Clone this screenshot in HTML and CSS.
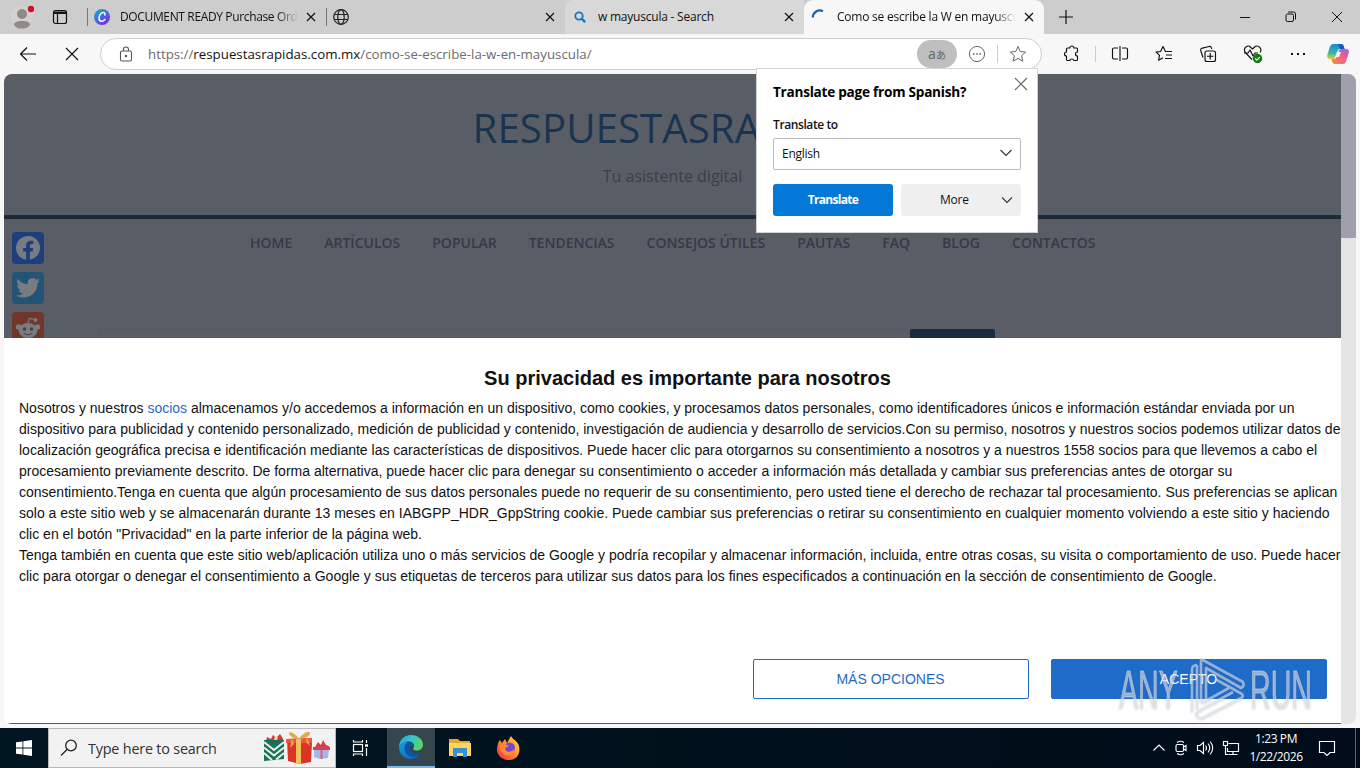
FILE: index.html
```html
<!DOCTYPE html>
<html lang="es">

<head>
  <meta charset="UTF-8">
  <title>Como se escribe la W en mayuscula</title>
  <link rel="stylesheet" href="styles.css">
</head>

<body>
  <div class="desktop">
    <div class="tabstrip">
      <div class="profile">
        <svg width="24" height="26" viewBox="0 0 24 26">
          <circle cx="12" cy="13" r="11" fill="#d3d2d0" />
          <circle cx="12" cy="10" r="5" fill="#8e8b88" />
          <path d="M4 21c0-3 3-4 8-4s8 1 8 4c-2 3-5 3.500-8 3.500s-6-.5-8-3.500z" fill="#8e8b88" />
          <circle cx="21" cy="5" r="3.200" fill="#d20f24" />
        </svg>
      </div>
      <div class="workspaces">
        <svg width="16" height="16" viewBox="0 0 16 16" fill="none" stroke="#111" stroke-width="1.200">
          <rect x="1.500" y="1.500" width="13" height="13" rx="2" />
          <path d="M2 3h12M5.500 4.500v10" />
          <path d="M1.500 4h13" stroke-width="2" />
        </svg>
      </div>
      <div class="tab tab-first">
        <svg class="favicon" width="16" height="16" viewBox="0 0 16 16">
          <defs>
            <linearGradient id="canva" x1="0" y1="0" x2=".7" y2="1">
              <stop offset="0" stop-color="#12b8ca" />
              <stop offset=".5" stop-color="#3b72dc" />
              <stop offset="1" stop-color="#8427df" />
            </linearGradient>
          </defs>
          <circle cx="8" cy="8" r="8" fill="url(#canva)" />
          <path d="M10.800 6c.7-2-.4-2.800-1.700-2.500C6.700 4 5 6.700 5 9.300c0 3.300 3.300 4.200 6 1.200" fill="none" stroke="#fff" stroke-width="1.500" stroke-linecap="round" />
        </svg>
        <span class="tab-title title-canva">DOCUMENT READY Purchase Order</span>
        <svg class="tab-close" width="10" height="10" viewBox="0 0 10 10"><path d="M1 1l8 8M9 1L1 9" /></svg>
      </div>
      <div class="tab tab-blank">
        <svg class="favicon" width="16" height="16" viewBox="0 0 16 16" fill="none" stroke="#222" stroke-width="1.200">
          <circle cx="8" cy="8" r="7.300" />
          <ellipse cx="8" cy="8" rx="3.200" ry="7.300" />
          <path d="M1.300 5.500h13.400M1.300 10.500h13.400" />
        </svg>
        <span class="tab-title"></span>
        <svg class="tab-close" width="10" height="10" viewBox="0 0 10 10"><path d="M1 1l8 8M9 1L1 9" /></svg>
      </div>
      <div class="tab tab-search">
        <svg class="favicon" width="16" height="16" viewBox="0 0 16 16" fill="none" stroke="#1c74c4">
          <circle cx="7" cy="7" r="3.700" stroke-width="1.800" />
          <path d="M9.800 9.800l3.400 3.400" stroke-width="2.400" />
        </svg>
        <span class="tab-title title-search">w mayuscula - Search</span>
        <svg class="tab-close" width="10" height="10" viewBox="0 0 10 10"><path d="M1 1l8 8M9 1L1 9" /></svg>
      </div>
      <div class="tab tab-active">
        <svg class="favicon" width="16" height="16" viewBox="0 0 16 16" fill="none" stroke="#1b62a8" stroke-width="2.200">
          <path d="M1.800 8.500A7 7 0 0 1 12 2.300" />
        </svg>
        <span class="tab-title title-active">Como se escribe la W en mayuscula</span>
        <svg class="tab-close" width="10" height="10" viewBox="0 0 10 10"><path d="M1 1l8 8M9 1L1 9" /></svg>
      </div>
      <div class="new-tab">
        <svg width="14" height="14" viewBox="0 0 14 14" stroke="#111" stroke-width="1.200"><path d="M7 0v14M0 7h14" /></svg>
      </div>
      <div class="window-buttons">
        <svg width="46" height="34" viewBox="0 0 46 34"><path d="M18 17.500h10" /></svg>
        <svg width="46" height="34" viewBox="0 0 46 34">
          <rect x="18" y="14" width="7.500" height="7.500" rx="1.500" />
          <path d="M20 12h5.500a2 2 0 0 1 2 2v5.500" />
        </svg>
        <svg width="46" height="34" viewBox="0 0 46 34"><path d="M18 12l10 10M28 12L18 22" /></svg>
      </div>
    </div>

    <div class="toolbar">
      <svg class="tool back" width="20" height="20" viewBox="0 0 20 20"><path d="M18 10H2.500M9 3.500L2.500 10L9 16.500" /></svg>
      <svg class="tool stop" width="20" height="20" viewBox="0 0 20 20"><path d="M4 4l12 12M16 4L4 16" /></svg>
      <div class="address">
        <svg class="lock" width="14" height="16" viewBox="0 0 14 16" fill="none" stroke="#555" stroke-width="1.100">
          <rect x="1.500" y="5" width="11" height="10" rx="1.500" />
          <path d="M4.500 5V3.500a2.500 2.500 0 0 1 5 0V5" />
          <circle cx="7" cy="10" r=".7" fill="#555" />
        </svg>
        <div class="url">https://<b>respuestasrapidas.com.mx</b>/como-se-escribe-la-w-en-mayuscula/</div>
        <div class="translate-pill">
          <span class="pill-latin">a</span><span class="pill-kana">あ</span>
        </div>
        <svg class="reader" width="18" height="18" viewBox="0 0 18 18" fill="none" stroke="#666">
          <circle cx="9" cy="9" r="7.600" />
          <path d="M5 9h1.600M8.200 9h1.600M11.400 9h1.600" stroke-width="1.600" />
        </svg>
        <div class="address-line"></div>
        <svg class="star" width="18" height="18" viewBox="0 0 18 18" fill="none" stroke="#666" stroke-linejoin="round"><path d="M9 1.500l2.200 5 5.500.6-4.100 3.600 1.200 5.500L9 13.400l-4.800 2.800 1.200-5.500L1.300 7.100l5.500-.6z" /></svg>
      </div>
      <div class="toolbar-icons">
        <svg class="tool" width="18" height="18" viewBox="0 0 18 18"><path d="M5.500 3h2.300a2 2 0 0 1 4 0h2.700q1 0 1 1v3a2 2 0 0 0 0 4v3.500q0 1-1 1H12a2.200 2.200 0 0 0-4.200 0H5.500q-1 0-1-1V11a2 2 0 0 1 0-4V4q0-1 1-1z" /></svg>
        <div class="tool-line"></div>
        <svg class="tool" width="18" height="18" viewBox="0 0 18 18"><path d="M7 3H3a1.500 1.500 0 0 0-1.500 1.500v8A1.500 1.500 0 0 0 3 14h4M11 3h4a1.500 1.500 0 0 1 1.500 1.500v8A1.500 1.500 0 0 1 15 14h-4M9 1v15" /></svg>
        <svg class="tool" width="18" height="18" viewBox="0 0 18 18"><path d="M17 6.500h-6.500L8 1.500 5.600 6.500l-4.500.6 3.400 3.300-.9 4.800L8 12.800M11 10h6M10 13.500h7" /></svg>
        <svg class="tool" width="18" height="18" viewBox="0 0 18 18"><rect x="6" y="6" width="10.500" height="10.500" rx="2" /><path d="M11.250 8v6.500M8 11.250h6.500M4 12.500L1.700 5.500Q1.300 4 2.500 3.400L10 1.500q2-.4 2.500 1.500l.3 1" /></svg>
        <svg class="tool" width="20" height="20" viewBox="0 0 20 20"><path d="M9 15.500L2.800 9C-.5 5.500 3 1 6.500 2.300L9.500 5l3-2.700C16 1 19.500 5 17 8.500M1 9h4l2-3 3 6 2-3h3" /><circle cx="14.500" cy="14.500" r="4.700" fill="#107c10" stroke="none" /><path d="M12.300 14.500l1.600 1.600 2.900-3" stroke="#fff" /></svg>
        <svg class="tool" width="18" height="18" viewBox="0 0 18 18"><path d="M2 9h2M8 9h2M14 9h2" stroke-width="2" /></svg>
        <svg class="copilot" width="24" height="22" viewBox="0 0 24 22">
          <defs>
            <linearGradient id="copA" x1="0" y1="0" x2="0" y2="1"><stop offset="0" stop-color="#168be0" /><stop offset=".6" stop-color="#36b6a2" /><stop offset="1" stop-color="#f1c52c" /></linearGradient>
            <linearGradient id="copB" x1="1" y1="0" x2="0" y2="1"><stop offset="0" stop-color="#a85adf" /><stop offset=".5" stop-color="#ef6380" /><stop offset="1" stop-color="#f98a42" /></linearGradient>
          </defs>
          <path d="M7 1h8q2 0 2.700 2l.8 3H14q-2 0-2.600 2l-2 6q-.7 2-2.500 2H4q-3.500 0-2.700-4L4 3.500Q5 1 7 1z" fill="url(#copA)" />
          <path d="M17 21H9q-2 0-2.700-2l-.8-3H8q2 0 2.600-2l2-6q.7-2 2.500-2H20q3.500 0 2.700 4L20 18.500Q19 21 17 21z" fill="url(#copB)" />
          <path d="M12 1h3q2 0 2.700 2l.8 3H14z" fill="#1b57c9" />
          <path d="M11 9h4l-2 5H9.300z" fill="#f7f7f7" />
        </svg>
      </div>
    </div>

    <div class="content">
      <div class="page">
        <div class="site">
          <header class="site-header">
            <div class="site-title">RESPUESTASRAPIDAS</div>
            <div class="site-tagline">Tu asistente digital</div>
          </header>
          <nav class="site-nav">
            <a>HOME</a><a>ARTÍCULOS</a><a>POPULAR</a><a>TENDENCIAS</a><a>CONSEJOS ÚTILES</a><a>PAUTAS</a><a>FAQ</a><a>BLOG</a><a>CONTACTOS</a>
          </nav>
          <div class="search-row">
            <div class="search-field"></div>
            <div class="search-button"></div>
          </div>
          <div class="share">
            <svg width="32" height="32" viewBox="0 0 32 32"><rect width="32" height="32" rx="4" fill="#1d3f7e" /><path d="M28 16a12 12 0 1 0-13.900 11.850v-8.400h-3V16h3v-2.650c0-3 1.800-4.650 4.550-4.650 1.300 0 2.700.23 2.700.23v2.950h-1.500c-1.500 0-1.970.95-1.970 1.900V16h3.350l-.55 3.450h-2.800v8.400A12 12 0 0 0 28 16z" fill="#777c83" /></svg>
            <svg width="32" height="32" viewBox="0 0 32 32"><rect width="32" height="32" rx="4" fill="#245475" /><path d="M28 8.500c-.9.400-1.800.66-2.800.78 1-.6 1.800-1.560 2.150-2.700-.95.560-2 .97-3.100 1.190a4.900 4.900 0 0 0-8.400 4.480C11.800 12 8.100 10 5.700 7a4.900 4.900 0 0 0 1.500 6.600c-.8 0-1.560-.25-2.200-.6v.06c0 2.400 1.700 4.400 3.950 4.850-.74.200-1.500.23-2.220.08a4.900 4.900 0 0 0 4.600 3.400A9.900 9.900 0 0 1 4 23.400 13.900 13.900 0 0 0 11.550 25.600c9.060 0 14-7.500 14-14v-.64c.96-.7 1.800-1.560 2.450-2.460z" fill="#777c83" /></svg>
            <svg width="32" height="32" viewBox="0 0 32 32"><rect width="32" height="32" rx="4" fill="#71352a" /><g fill="#777c83"><ellipse cx="16" cy="18.500" rx="9.500" ry="7.500" /><circle cx="6.500" cy="15" r="2.700" /><circle cx="25.500" cy="15" r="2.700" /><circle cx="23.500" cy="8" r="2" /></g><path d="M16 11l1.300-4.700 5 1.200" fill="none" stroke="#777c83" stroke-width="1.200" /><circle cx="12.500" cy="17" r="1.700" fill="#533a37" /><circle cx="19.500" cy="17" r="1.700" fill="#533a37" /><path d="M12 21.500q4 3 8 0" fill="none" stroke="#533a37" /></svg>
          </div>
        </div>

        <div class="consent">
          <h2>Su privacidad es importante para nosotros</h2>
          <p>Nosotros y nuestros <a>socios</a> almacenamos y/o accedemos a información en un dispositivo, como cookies, y procesamos datos personales, como identificadores únicos e información estándar enviada por un<br>
            dispositivo para publicidad y contenido personalizado, medición de publicidad y contenido, investigación de audiencia y desarrollo de servicios.Con su permiso, nosotros y nuestros socios podemos utilizar datos de<br>
            localización geográfica precisa e identificación mediante las características de dispositivos. Puede hacer clic para otorgarnos su consentimiento a nosotros y a nuestros 1558 socios para que llevemos a cabo el<br>
            procesamiento previamente descrito. De forma alternativa, puede hacer clic para denegar su consentimiento o acceder a información más detallada y cambiar sus preferencias antes de otorgar su<br>
            consentimiento.Tenga en cuenta que algún procesamiento de sus datos personales puede no requerir de su consentimiento, pero usted tiene el derecho de rechazar tal procesamiento. Sus preferencias se aplican<br>
            solo a este sitio web y se almacenarán durante 13 meses en IABGPP_HDR_GppString cookie. Puede cambiar sus preferencias o retirar su consentimiento en cualquier momento volviendo a este sitio y haciendo<br>
            clic en el botón "Privacidad" en la parte inferior de la página web.<br>
            Tenga también en cuenta que este sitio web/aplicación utiliza uno o más servicios de Google y podría recopilar y almacenar información, incluida, entre otras cosas, su visita o comportamiento de uso. Puede hacer<br>
            clic para otorgar o denegar el consentimiento a Google y sus etiquetas de terceros para utilizar sus datos para los fines especificados a continuación en la sección de consentimiento de Google.</p>
          <div class="consent-buttons">
            <button class="btn-more">MÁS OPCIONES</button>
            <button class="btn-accept">ACEPTO</button>
          </div>
        </div>
      </div>
      <div class="scrollbar"><div class="thumb"></div></div>
    </div>

    <div class="taskbar">
      <div class="start">
        <svg width="16" height="16" viewBox="0 0 16 16" fill="#fff"><path d="M0 2.300l6.500-.9v6.200H0zM7.300 1.300L16 0v7.600H7.300zM0 8.400h6.500v6.200L0 13.700zM7.300 8.400H16V16l-8.700-1.300z" /></svg>
      </div>
      <div class="task-search">
        <svg width="18" height="18" viewBox="0 0 18 18" fill="none" stroke="#222" stroke-width="1.300"><circle cx="11" cy="6.500" r="5.300" /><path d="M7 10.500l-6 6" /></svg>
        <span>Type here to search</span>
        <svg class="gifts" width="68" height="34" viewBox="0 0 68 34">
          <path d="M3 10l1-4 4 2 2-4 3 3 4-4 2 3 2 4z" fill="#d9362f" />
          <path d="M11 9l1-4 3 1-1 3" fill="#f0d69a" />
          <path d="M1 9h20v19L1 30z" fill="#17715d" />
          <path d="M1 11l10 8 10-8M1 16.500l10 8 10-8M1 22l8 7M21 22l-8 6.500" fill="none" stroke="#eef2e6" stroke-width="2" />
          <path d="M24 8l25-1v5l-1 19-11 2-12-3z" fill="#dc3327" />
          <path d="M23 8l26-1v5H23z" fill="#ef5540" />
          <path d="M33 8h5v25l-5-1z" fill="#f3c15b" />
          <path d="M36 8C32 2 27 0 26 2s5 6 10 6c5 0 12-3 11-6s-7 0-11 6zM29 6l-2 11 4-4zM44 6l3 9-4-4z" fill="#dfa94c" />
          <path d="M52 16l3-5 3 3 2-5 3 5 3 1v3H50z" fill="#db3b43" />
          <path d="M51 17h15l-1 10-8 1-6-2z" fill="#a9b5e6" />
          <path d="M57.500 17h2v11h-2z" fill="#d7627f" />
          <path d="M50 16h17v3H50z" fill="#c9455c" />
        </svg>
      </div>
      <div class="task-item">
        <svg width="18" height="18" viewBox="0 0 18 18" fill="none" stroke="#fff" stroke-width="1.200"><rect x="2.500" y="5.500" width="9" height="7" /><path d="M2.500 1v2h9V1M2.500 17v-2h9v2M15.500 1v3M15.500 9v8" /><path d="M14 6.500h3" stroke-width="2.400" /></svg>
      </div>
      <div class="task-item task-edge">
        <svg width="24" height="24" viewBox="0 0 24 24">
          <defs>
            <linearGradient id="edgeTop" x1="0" y1="0" x2="1" y2=".4"><stop offset="0" stop-color="#259fdd" /><stop offset=".5" stop-color="#30c4cf" /><stop offset="1" stop-color="#5bd565" /></linearGradient>
            <linearGradient id="edgeLow" x1="0" y1="0" x2="1" y2="1"><stop offset="0" stop-color="#1aa0df" /><stop offset="1" stop-color="#1259b5" /></linearGradient>
          </defs>
          <path d="M0 12C0 5 5 0 12 0c7 0 12 4.500 12 9.500 0 4-3 6-6.300 6-3.200 0-4.200-1-3.200-2.500 2-4-1.500-6.500-5-6.500C5 6.500 1.500 8.500 0 12z" fill="url(#edgeTop)" />
          <path d="M0 12c1.500-4 5-6 9-5.500C6 9 5 12 6.500 15.500 8.500 20 14 21.500 20.500 19.500 18 23 14.500 24 12 24 5 24 0 19 0 12z" fill="url(#edgeLow)" />
          <path d="M9 6.500c3 0 6 2 6 4.500-2-1-4 0-4 3 0 3 4 5 11 4-2 3-6 4-9 3.500C6 21 2.500 12 9 6.500z" fill="#0f54a4" />
        </svg>
      </div>
      <div class="task-item task-files">
        <svg width="22" height="20" viewBox="0 0 22 20"><path d="M0 1h9l2 2h10v14H0z" fill="#e9a62d" /><path d="M0 5h22v13H0z" fill="#ffd663" /><path d="M4 10h14v9h-4v-4H8v4H4z" fill="#3690d5" /></svg>
      </div>
      <div class="task-item task-firefox">
        <svg width="24" height="24" viewBox="0 0 24 24">
          <defs><linearGradient id="fox" x1="1" y1="0" x2="0" y2="1"><stop offset="0" stop-color="#ffe34b" /><stop offset=".5" stop-color="#ff8b26" /><stop offset="1" stop-color="#f01d5b" /></linearGradient></defs>
          <path d="M3 4l2 3 3-4 2 4 4-7c1 3 7 5 8 10 4 18-21 18-22 4 0-4 1-8 3-10z" fill="url(#fox)" />
          <circle cx="12.500" cy="12" r="5.500" fill="#7546d6" />
          <path d="M3 9c3-2 7-1 9 1.500-3 0-4.500 1.500-3.500 3.500 2 3 6 2 9-1-1 6-5 7-9 6-4-1-6-6-5.500-10z" fill="#ff8a32" />
        </svg>
      </div>
      <div class="tray">
        <svg width="14" height="16" viewBox="0 0 14 16"><path d="M1.500 10.500L7 5l5.500 5.500" /></svg>
        <svg width="14" height="16" viewBox="0 0 14 16"><rect x="2" y="4.500" width="7.500" height="7" rx="1.500" /><path d="M9.500 7l2.500-1.500v5L9.500 9M3 2.500q3.500-2.500 7 0M3 13.500q3.500 2.500 7 0" /></svg>
        <svg width="18" height="16" viewBox="0 0 18 16"><path d="M1.500 5.500H4l3.500-3v11L4 10.500H1.500zM9.500 5.500q2 2.500 0 5M12 3.500q3.500 4.500 0 9M14.200 1.500q5 6.500 0 13" /></svg>
        <svg width="18" height="16" viewBox="0 0 18 16"><path d="M6.500 3.500h10v8h-11V8M11 11.500v3M6.500 14.500h9M1.500 1.500h4v4h-4zM3.500 5.500v9H6" /></svg>
      </div>
      <div class="clock"><span class="time">1:23 PM</span><span class="date">1/22/2026</span></div>
      <svg class="notify" width="18" height="18" viewBox="0 0 18 18"><path d="M1.500 2.500h15v11H12l-3 3-3-3H1.500z" /></svg>
      <div class="show-desktop"></div>
    </div>

    <div class="popup">
      <div class="popup-head">
        <span class="popup-title">Translate page from Spanish?</span>
        <svg class="popup-close" width="14" height="14" viewBox="0 0 14 14"><path d="M1 1l12 12M13 1L1 13" /></svg>
      </div>
      <div class="popup-label">Translate to</div>
      <div class="select">
        <span>English</span>
        <svg width="14" height="8" viewBox="0 0 14 8"><path d="M1.500 1L7 6.500 12.500 1" /></svg>
      </div>
      <div class="popup-buttons">
        <div class="popup-primary">Translate</div>
        <div class="popup-more"><span>More</span><svg width="12" height="8" viewBox="0 0 12 8"><path d="M1 1.500l5 5 5-5" /></svg></div>
      </div>
    </div>

    <div class="watermark">
      <span class="mark-any">ANY</span>
      <svg width="58" height="64" viewBox="0 0 58 64"><path d="M9 9q-5 0-5 5v42M9 9v44M13 47V3l42 23q2 4-2 6L18 12v32M14 47l27-15M27 23l27 15q2 3-1 4L14 62q-7 0-5-6l36-20" /></svg>
      <span class="mark-run">RUN</span>
    </div>
  </div>
</body>

</html>
```
FILE: styles.css
```css
* {
  box-sizing: border-box;
}

body {
  margin: 0;
  overflow: hidden;
  font-family: "Open Sans", "Noto Sans", sans-serif;
}

svg {
  display: block;
  flex: none;
}

.desktop {
  position: relative;
  width: 1360px;
  height: 768px;
  background: #f7f7f7;
  display: flex;
  flex-direction: column;
  overflow: hidden;
}

/* tab strip */
.tabstrip {
  height: 34px;
  flex: none;
  display: flex;
  background: #cdcdcd;
}

.profile {
  width: 44px;
  padding: 4px 0 0 10px;
}

.workspaces {
  width: 43px;
  padding: 9px 0 0 8px;
}

.tab {
  width: 239px;
  height: 34px;
  display: flex;
  align-items: center;
  padding: 0 10px 0 7px;
  font-size: 12px;
  letter-spacing: -0.22px;
  color: #111;
}

.tab-first {
  background: linear-gradient(#777, #777) 0 8px / 1px 18px no-repeat;
}

.tab-blank {
  background: linear-gradient(#777, #777) 0 8px / 1px 18px no-repeat;
}

.tab-search {
  background: #d8d8d8;
  border-radius: 8px 0 0 0;
}

.tab-active {
  width: 240px;
  background: #f7f7f7;
  border-radius: 9px 9px 0 0;
}

.favicon {
  margin-right: 10px;
}

.tab-title {
  flex: 1;
  overflow: hidden;
  white-space: nowrap;
  margin-right: 8px;
  padding-bottom: 1px;
}

.title-canva {
  letter-spacing: -0.36px;
}

.title-canva,
.title-active {
  -webkit-mask-image: linear-gradient(to right, #000 88%, transparent);
  mask-image: linear-gradient(to right, #000 88%, transparent);
}

.tab-close {
  fill: none;
  stroke: #111;
  stroke-width: 1.2;
}

.new-tab {
  padding: 10px 0 0 15px;
}

.window-buttons {
  margin-left: auto;
  display: flex;
  fill: none;
  stroke: #111;
}

/* toolbar */
.toolbar {
  height: 40px;
  flex: none;
  display: flex;
  align-items: center;
  padding-left: 18px;
  background: #f7f7f7;
}

.tool {
  fill: none;
  stroke: #111;
  stroke-width: 1.15;
  stroke-linejoin: round;
}

.stop {
  margin-left: 24px;
}

.address {
  width: 942px;
  height: 32px;
  margin-left: 18px;
  padding-left: 18px;
  display: flex;
  align-items: center;
  background: #fff;
  border: 1px solid #cfcfcf;
  border-radius: 16px;
}

.url {
  width: 784px;
  padding-left: 15px;
  font-size: 13.3px;
  color: #6c6c6c;
  white-space: nowrap;
}

.url b {
  font-weight: 400;
  color: #111;
}

.translate-pill {
  width: 40px;
  height: 28px;
  margin-right: 11px;
  display: flex;
  align-items: center;
  justify-content: center;
  background: #bfbfbf;
  border-radius: 14px;
  color: #666;
}

.pill-latin {
  font-size: 14px;
  line-height: 14px;
}

.pill-kana {
  font: 10px "Noto Sans CJK JP", sans-serif;
}

.address-line {
  width: 1px;
  height: 18px;
  margin: 0 11px;
  background: #ccc;
}

.toolbar-icons {
  flex: 1;
  display: flex;
  align-items: center;
  gap: 26px;
  padding-left: 20px;
}

.tool-line {
  width: 1px;
  height: 16px;
  margin: 0 -11px 0 -11px;
  background: #ccc;
}

.copilot {
  margin-left: -7px;
}

/* web page */
.content {
  height: 650px;
  margin: 0 4px;
  flex: none;
  display: flex;
  border-radius: 8px;
  overflow: hidden;
}

.page {
  width: 1337px;
  display: flex;
  flex-direction: column;
  background: #fff;
  border-bottom: 1px solid #54585f;
}

.site {
  position: relative;
  height: 264px;
  flex: none;
  background: #595e66;
  overflow: hidden;
}

.site-header {
  height: 145px;
  padding-top: 27px;
  text-align: center;
  border-bottom: 4px solid #1b2b3a;
}

.site-title {
  font-size: 40.3px;
  line-height: 54px;
  color: #1a3450;
}

.site-tagline {
  margin-top: 10px;
  font-size: 16px;
  line-height: 22px;
  color: #3a3e48;
}

.site-nav {
  height: 110px;
  padding: 14px 0 0 246px;
  display: flex;
  gap: 32px;
  font-size: 14px;
  line-height: 20px;
  font-weight: 600;
  color: #343a46;
  white-space: nowrap;
}

.search-row {
  display: flex;
  padding-left: 96px;
}

.search-field {
  width: 810px;
  height: 9px;
  border-top: 1px solid #555a62;
  border-left: 1px solid #555a62;
}

.search-button {
  width: 85px;
  height: 9px;
  background: #1a2c40;
  border-radius: 2px 2px 0 0;
}

/* share buttons float over the left edge of the page */
.share {
  position: absolute;
  left: 8px;
  top: 158px;
  display: flex;
  flex-direction: column;
  gap: 8px;
}

.consent {
  flex: 1;
  display: flex;
  flex-direction: column;
  padding: 28px 0 0 15px;
  font-family: "Liberation Sans", Arial, sans-serif;
  color: #111;
}

.consent h2 {
  margin: 0 0 8px;
  width: 1337px;
  font-size: 20px;
  line-height: 24px;
  text-align: center;
}

.consent p {
  margin: 0;
  font-size: 14px;
  line-height: 21px;
  white-space: nowrap;
}

.consent p a {
  color: #1f6bc4;
}

.consent-buttons {
  display: flex;
  justify-content: flex-end;
  gap: 22px;
  margin-top: 72px;
  padding-right: 14.5px;
}

.consent-buttons button {
  width: 276px;
  height: 40px;
  padding: 0;
  font: 14px "Liberation Sans", Arial, sans-serif;
  border: 1px solid #1f6bc4;
  border-radius: 2px;
}

.btn-more {
  background: #fff;
  color: #1f6bc4;
}

.consent-buttons .btn-accept {
  background: #1f6bc9;
  color: #fff;
}

.scrollbar {
  width: 15px;
  background: #e4e4e4;
}

.thumb {
  height: 164px;
  background: #a09fac;
}

/* taskbar */
.taskbar {
  height: 40px;
  margin-top: auto;
  flex: none;
  display: flex;
  background: linear-gradient(to right, #001620, #000c19);
}

.start {
  width: 48px;
  display: flex;
  align-items: center;
  justify-content: center;
}

.task-search {
  width: 288px;
  display: flex;
  align-items: center;
  padding: 0 4px 0 11px;
  background: #f2f2f2;
  border: 1px solid #b9b9b9;
  font-size: 14.4px;
  letter-spacing: -0.2px;
  color: #333;
}

.task-search span {
  margin-left: 10px;
}

.gifts {
  margin-left: auto;
}

.task-item {
  width: 48px;
  display: flex;
  align-items: center;
  justify-content: center;
}

.task-edge {
  margin-left: 3px;
  background: #35464e;
  border-bottom: 2px solid #76b9ed;
}

.task-files {
  margin-left: 1px;
}

.task-firefox {
  margin-left: 1px;
}

.tray {
  margin-left: auto;
  display: flex;
  align-items: center;
  gap: 8px;
}

.tray svg,
.notify {
  fill: none;
  stroke: #fff;
  stroke-width: 1.15;
}

.clock {
  width: 72px;
  padding-top: 2px;
  display: flex;
  flex-direction: column;
  align-items: center;
  font-size: 12px;
  letter-spacing: -0.4px;
  line-height: 18px;
  color: #fff;
}

.notify {
  margin: 11px 19px 0 6px;
}

.show-desktop {
  width: 5px;
  border-left: 1px solid #5b626b;
}

/* translate popup, opened from the address bar */
.popup {
  position: absolute;
  left: 756px;
  top: 68px;
  width: 282px;
  height: 165px;
  padding: 8px 16px 0;
  background: #fff;
  border: 1px solid #d4d4d4;
  font-size: 12px;
  letter-spacing: -0.25px;
  color: #111;
}

.popup-head {
  display: flex;
  justify-content: space-between;
  height: 38px;
}

.popup-title {
  padding-top: 5px;
  font-size: 13.6px;
  letter-spacing: -0.25px;
  line-height: 20px;
  font-weight: 700;
  white-space: nowrap;
  color: #000;
}

.popup-close {
  margin-right: -7px;
}

.popup svg {
  fill: none;
  stroke: #333;
  stroke-width: 1.1;
}

.popup .popup-close {
  stroke: #666;
}

.popup-label {
  height: 23px;
  line-height: 20px;
  font-weight: 600;
  letter-spacing: -0.4px;
}

.select {
  height: 32px;
  padding: 0 7px 2px 8px;
  display: flex;
  align-items: center;
  justify-content: space-between;
  border: 1px solid #bcbcbc;
  border-radius: 2px;
}

.popup-buttons {
  display: flex;
  gap: 8px;
  margin-top: 14px;
}

.popup-primary,
.popup-more {
  width: 120px;
  height: 32px;
  line-height: 32px;
  border-radius: 3px;
}

.popup-primary {
  text-align: center;
  font-weight: 700;
  letter-spacing: -0.7px;
  color: #fff;
  background: #0478d7;
}

.popup-more {
  display: flex;
  align-items: center;
  justify-content: space-between;
  padding: 0 8px 0 39px;
  background: #efefef;
}

/* watermark lies over the accept button */
.watermark {
  position: absolute;
  left: 1119px;
  top: 656px;
  height: 64px;
  display: flex;
  align-items: center;
  color: rgba(222, 229, 237, .6);
  font-family: "Liberation Sans", Arial, sans-serif;
  font-size: 54px;
  line-height: 64px;
  filter: drop-shadow(0 1px 1px rgba(90, 90, 90, .35));
}

.watermark svg {
  margin: 0 4px 0 11px;
  fill: none;
  stroke: rgba(222, 229, 237, .6);
  stroke-width: 2.6;
  stroke-linejoin: round;
}

.mark-any,
.mark-run {
  display: block;
  width: 58px;
  padding-top: 2px;
  transform: scaleX(.53);
  transform-origin: left;
  -webkit-text-stroke: 1px rgba(222, 229, 237, .5);
}
```
